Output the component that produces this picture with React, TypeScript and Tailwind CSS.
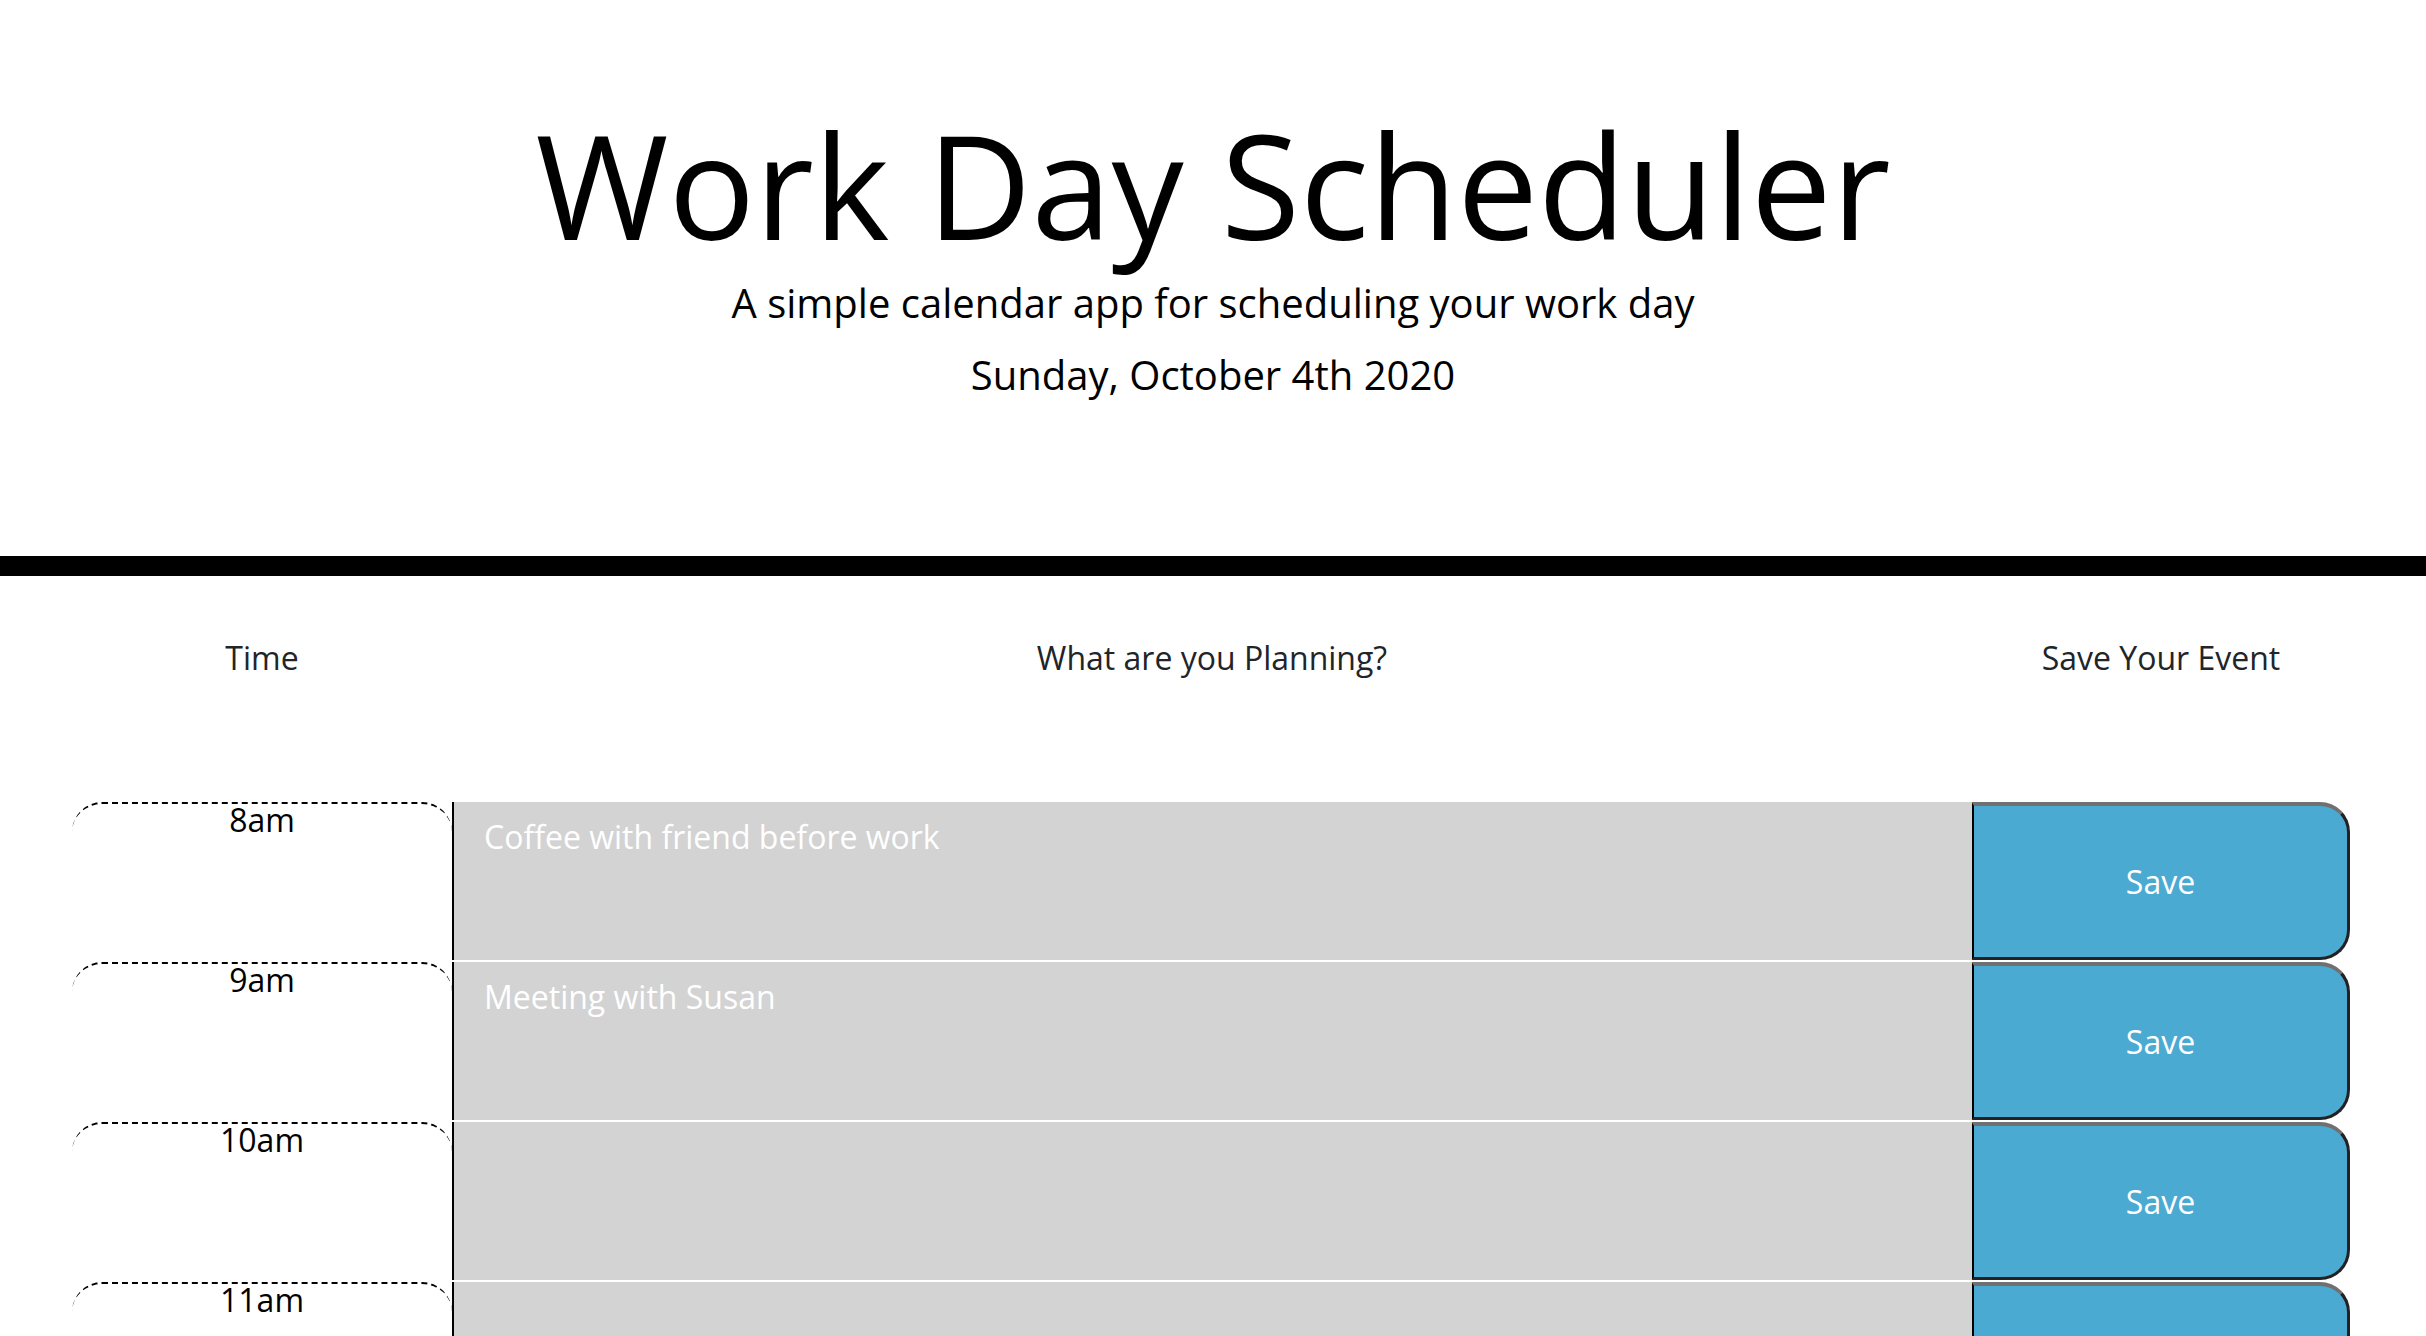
import { useState } from 'react'

type Slot = { hour: string; text: string }

const initialSlots: Slot[] = [
  { hour: '8am', text: 'Coffee with friend before work' },
  { hour: '9am', text: 'Meeting with Susan' },
  { hour: '10am', text: '' },
  { hour: '11am', text: '' },
  { hour: '12pm', text: '' },
  { hour: '1pm', text: '' },
  { hour: '2pm', text: '' },
  { hour: '3pm', text: '' },
  { hour: '4pm', text: '' },
  { hour: '5pm', text: '' },
]

function TimeRow({ slot, onChange }: { slot: Slot; onChange: (t: string) => void }) {
  return (
    <div className="flex h-[160px] border-t-2 border-white">
      {/* hour label */}
      <div className="w-[380px] shrink-0 rounded-t-[30px] border-t-2 border-dashed border-black text-center text-[32px] leading-[32px] text-black">
        {slot.hour}
      </div>

      {/* past hours are grey */}
      <textarea
        value={slot.text}
        onChange={(e) => onChange(e.target.value)}
        className="w-[1520px] shrink-0 resize-none border-l-2 border-black bg-[#d3d3d3] px-[30px] pt-[11px] text-[32px] leading-[48px] text-white outline-none"
      />

      <button className="flex w-[378px] shrink-0 items-center justify-center rounded-r-[30px] border-t-4 border-r-[3px] border-b-[3px] border-l-2 border-t-[#707070] border-r-[#222] border-b-[#222] border-l-black bg-[#4baad2] text-[32px] text-white">
        Save
      </button>
    </div>
  )
}

export default function App() {
  const [slots, setSlots] = useState(initialSlots)

  const update = (i: number, t: string) => {
    setSlots(slots.map((s, j) => (j === i ? { ...s, text: t } : s)))
  }

  return (
    <div className="min-h-screen bg-white font-['Open_Sans','Liberation_Sans',sans-serif]">
      <header className="border-b-[20px] border-black pt-[112px] pb-[145px] text-center">
        <h1 className="text-[144px] leading-[144px] text-black">Work Day Scheduler</h1>
        <p className="mt-[11px] text-[40px] leading-[72px] text-black">
          A simple calendar app for scheduling your work day
        </p>
        <p className="text-[40px] leading-[72px] text-black">Sunday, October 4th 2020</p>
      </header>

      <div className="ml-[72px] w-[2278px] pb-[80px]">
        <div className="mt-[58px] flex text-center text-[32px] leading-[48px] text-[#212529]">
          <div className="w-[380px]">Time</div>
          <div className="w-[1520px]">What are you Planning?</div>
          <div className="w-[378px]">Save Your Event</div>
        </div>

        <div className="mt-[118px]">
          {slots.map((s, i) => (
            <TimeRow key={s.hour} slot={s} onChange={(t) => update(i, t)} />
          ))}
        </div>
      </div>
    </div>
  )
}
